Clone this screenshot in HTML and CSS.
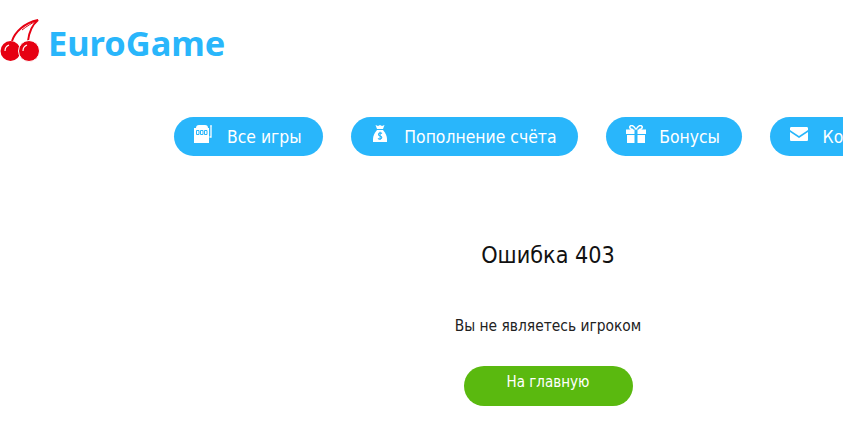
FILE: index.html
```html
<!DOCTYPE html>
<html lang="ru">
<head>
    <meta charset="UTF-8">
    <title>EuroGame</title>
    <link rel="stylesheet" href="styles.css">
</head>
<body>
    <div class="header">
        <a class="logo" href="#">
            <svg class="cherry" width="42" height="46" viewBox="0 18 42 46">
                <path d="M12 41 C15 32 24 23 38 20 C32 25 29 32 28 41" fill="none" stroke="#e60012" stroke-width="2"/>
                <path d="M22 30 C27 26 32 23 38 20" fill="none" stroke="#e60012" stroke-width="1"/>
                <circle cx="10.500" cy="51" r="10" fill="#e60012"/>
                <circle cx="29" cy="51" r="10.500" fill="#e60012" stroke="#fff" stroke-width="1"/>
                <path d="M5 51 C5 48 6.500 46 9 45" fill="none" stroke="#fff" stroke-width="1.200"/>
                <path d="M23 51 C23 48 24.500 46 27 45" fill="none" stroke="#fff" stroke-width="1.200"/>
            </svg>
            <span class="logo-text">EuroGame</span>
        </a>
    </div>
    <div class="menu">
        <a class="menu-btn" href="#">
            <svg class="icon" width="20" height="20" viewBox="0 0 20 20">
                <path d="M2 3 C2 1 3 0 5 0 H11 C13 0 14 1 14 3 H15 V18 H0 V3 Z" fill="#fff"/>
                <path d="M2.500 5.500 H5 V9.500 H2.500 Z M6.500 5.500 H9 V9.500 H6.500 Z M10.500 5.500 H13 V9.500 H10.500 Z" fill="#fff" stroke="#29b6fb" stroke-width="1"/>
                <path d="M17 1 V12 H15.500" fill="none" stroke="#fff" stroke-width="1.300"/>
                <circle cx="17" cy="0.800" r="0.800" fill="#fff"/>
            </svg>
            <span>Все игры</span>
        </a>
        <a class="menu-btn" href="#">
            <svg class="icon" width="20" height="20" viewBox="0 0 20 20">
                <path d="M4.500 0 L7 1 L9 0 L11 1 L13.500 0 L12 4 H6 Z" fill="#fff"/>
                <path d="M6 5 H12 C14.500 8 16 11 16 14 V17 H2 V14 C2 11 3.500 8 6 5 Z" fill="#fff"/>
                <path d="M11 8.500 C10 7.500 7.500 7.500 7.500 9.500 C7.500 11.500 10.800 10.500 10.800 12.500 C10.800 14.300 8 14.300 7 13.300 M9.100 6.800 V15" fill="none" stroke="#29b6fb" stroke-width="1.100"/>
            </svg>
            <span>Пополнение счёта</span>
        </a>
        <a class="menu-btn" href="#">
            <svg class="icon" width="20" height="20" viewBox="0 0 20 20">
                <path d="M0 4.500 H8.500 V9 H0 Z M11.500 4.500 H20 V9 H11.500 Z M1 10 H8.500 V18 H1 Z M11.500 10 H19 V18 H11.500 Z" fill="#fff"/>
                <path d="M10 4.500 C8 1 6 0 4.500 0.800 C3 1.800 4 4.500 7 4.500 M10 4.500 C12 1 14 0 15.500 0.800 C17 1.800 16 4.500 13 4.500" fill="none" stroke="#fff" stroke-width="1.500"/>
            </svg>
            <span>Бонусы</span>
        </a>
        <a class="menu-btn" href="#">
            <svg class="icon" width="20" height="20" viewBox="0 0 20 20">
                <path d="M0 3.500 C0 2.500 0.500 2 1.500 2 H16.500 C17.500 2 18 2.500 18 3.500 V5 L9 11 L0 5 Z M0 7 L9 13 L18 7 V14.500 C18 15.500 17.500 16 16.500 16 H1.500 C0.500 16 0 15.500 0 14.500 Z" fill="#fff"/>
            </svg>
            <span>Контакты</span>
        </a>
    </div>
    <div class="error">
        <h1>Ошибка 403</h1>
        <p>Вы не являетесь игроком</p>
        <a class="home-btn" href="#">На главную</a>
    </div>
</body>
</html>
```

FILE: styles.css
```css
body {
    margin: 0;
    height: 444px;
    overflow: hidden;
    font-family: 'DejaVu Sans', sans-serif;
    font-stretch: condensed;
    background: white;
    color: #222;
}

a {
    text-decoration: none;
}

.header {
    padding-top: 18px;
}

.logo {
    display: flex;
    align-items: center;
    gap: 6px;
    height: 46px;
    color: #29b6fb;
    font-family: 'Noto Sans', sans-serif;
    font-stretch: normal;
    font-size: 34.4px;
    font-weight: 700;
}

.logo-text {
    padding-top: 2px;
}

.menu {
    display: flex;
    gap: 28px;
    margin-top: 53px;
    padding-left: 174px;
    white-space: nowrap;
}

.menu-btn {
    display: flex;
    align-items: center;
    gap: 13px;
    height: 39px;
    padding: 0 21.7px 0 20px;
    border-radius: 20px;
    background: #29b6fb;
    color: white;
    font-size: 17.4px;
    flex-shrink: 0;
}

.icon {
    flex-shrink: 0;
    margin-top: -3px;
}

.error {
    width: 340px;
    margin: 85px 0 0 378px;
    text-align: center;
}

h1 {
    margin: 0;
    font-size: 23.2px;
    font-weight: normal;
    color: #111;
}

p {
    margin: 49px 0 0;
    font-size: 15.4px;
}

.home-btn {
    display: block;
    width: 169px;
    height: 40px;
    margin: 31px auto 0;
    border-radius: 20px;
    background: #5ab90f;
    color: white;
    font-size: 15px;
    line-height: 32px;
}
```
